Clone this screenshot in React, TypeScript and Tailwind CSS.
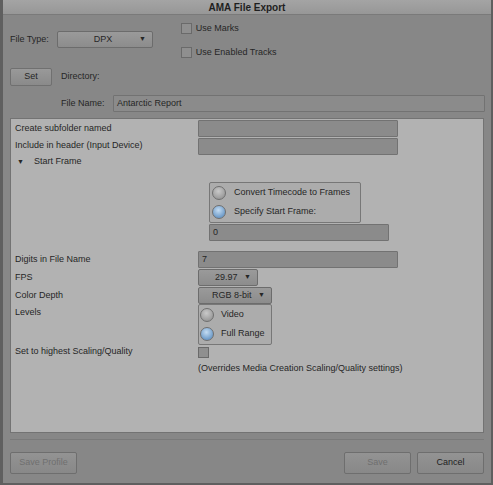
import type { ReactNode } from "react";

const font = "font-['Liberation_Sans',Arial,sans-serif]";

function Radio({ on }: { on?: boolean }) {
  return (
    <span
      className={`inline-block w-[14px] h-[14px] rounded-full border border-[#6f6f6f] shrink-0 ${
        on
          ? "bg-[radial-gradient(circle_at_45%_35%,#c4dcf2,#6f9cc9_70%)]"
          : "bg-[radial-gradient(circle_at_45%_35%,#c9c9c9,#999_75%)]"
      }`}
    />
  );
}

function Checkbox() {
  return (
    <span className="inline-block w-[11px] h-[11px] border border-[#6a6a6a] bg-[#8f8f8f] shrink-0" />
  );
}

function Select({ value, width, indent = "pl-[12px]" }: { value: string; width: string; indent?: string }) {
  return (
    <div
      className={`${width} h-[17px] flex items-center justify-between ${indent} pr-[6px] rounded-[2px] border border-[#6c6c6c] bg-gradient-to-b from-[#9a9a9a] to-[#8c8c8c] text-[#262626]`}
    >
      <span>{value}</span>
      <span className="text-[7px]">▼</span>
    </div>
  );
}

function Field({ width, value }: { width: string; value?: string }) {
  return (
    <div
      className={`${width} h-[17px] flex items-center pl-[3px] border border-[#727272] bg-[#8b8b8b] text-[#262626] rounded-[1px]`}
    >
      {value}
    </div>
  );
}

function Row({ label, children, h = "h-[17px]" }: { label: string; children?: ReactNode; h?: string }) {
  return (
    <div className={`flex items-center ${h}`}>
      <div className="w-[187px] pl-[4px] text-[#262626]">{label}</div>
      {children}
    </div>
  );
}

function Button({ label, width, disabled }: { label: string; width: string; disabled?: boolean }) {
  return (
    <div
      className={`${width} h-[22px] flex items-center justify-center border border-[#6e6e6e] rounded-[2px] bg-gradient-to-b from-[#939393] to-[#888] ${
        disabled ? "text-[#6f6f6f]" : "text-[#1e1e1e]"
      }`}
    >
      {label}
    </div>
  );
}

export default function App() {
  return (
    <div
      className={`w-[493px] h-[485px] flex flex-col bg-[#878787] border-l-[3px] border-r-[2px] border-b-[2px] border-[#5f5f5f] text-[9px] ${font}`}
    >
      {/* Title */}
      <div className="h-[15px] flex items-center justify-center bg-gradient-to-b from-[#a4a4a4] to-[#979797] border-b border-[#7a7a7a] text-[10px] font-bold text-[#1f1f1f]">
        AMA File Export
      </div>

      {/* Top section */}
      <div className="flex pl-[7px] pt-[7px] h-[46px]">
        <div className="flex items-center gap-[8px] h-[33px] mt-[1px] text-[#262626]">
          <span>File Type:</span>
          <Select value="DPX" width="w-[96px]" indent="pl-[36px]" />
        </div>
        <div className="flex flex-col ml-[28px] gap-[10px] text-[#262626]">
          <div className="flex items-center gap-[4px]">
            <Checkbox />
            <span>Use Marks</span>
          </div>
          <div className="flex items-center gap-[4px]">
            <Checkbox />
            <span>Use Enabled Tracks</span>
          </div>
        </div>
      </div>

      <div className="flex items-center pl-[7px] mt-[7px] h-[18px] text-[#262626]">
        <div className="w-[42px] h-[18px] flex items-center justify-center border border-[#707070] rounded-[2px] bg-gradient-to-b from-[#999] to-[#8a8a8a]">
          Set
        </div>
        <span className="ml-[9px]">Directory:</span>
      </div>

      <div className="flex items-center pl-[58px] mt-[9px] h-[17px] text-[#262626]">
        <span className="w-[52px]">File Name:</span>
        <Field width="w-[372px]" value="Antarctic Report" />
      </div>

      {/* Panel */}
      <div className="mx-[7px] mt-[6px] h-[315px] bg-[#b2b2b2] border border-[#737373] pt-[1px] flex flex-col">
        <Row label="Create subfolder named">
          <Field width="w-[200px]" />
        </Row>
        <Row label="Include in header (Input Device)">
          <div className="mt-[2px]">
            <Field width="w-[200px]" />
          </div>
        </Row>
        <div className="flex items-center h-[14px] mt-[1px] pl-[6px] text-[#262626]">
          <span className="text-[7px] mr-[10px]">▼</span>
          <span>Start Frame</span>
        </div>

        <div className="ml-[198px] mt-[13px] w-[152px] h-[41px] border border-[#777] rounded-[2px] bg-[#acacac] flex flex-col justify-center gap-[5px] pl-[2px] text-[#262626]">
          <div className="flex items-center gap-[8px]">
            <Radio />
            <span>Convert Timecode to Frames</span>
          </div>
          <div className="flex items-center gap-[8px]">
            <Radio on />
            <span>Specify Start Frame:</span>
          </div>
        </div>
        <div className="ml-[198px] mt-[1px]">
          <Field width="w-[180px]" value="0" />
        </div>

        <div className="mt-[10px]">
          <Row label="Digits in File Name">
            <Field width="w-[200px]" value="7" />
          </Row>
        </div>
        <div className="mt-[1px]">
          <Row label="FPS">
            <Select value="29.97" width="w-[60px]" indent="pl-[16px]" />
          </Row>
        </div>
        <div className="mt-[1px]">
          <Row label="Color Depth">
            <Select value="RGB 8-bit" width="w-[74px]" indent="pl-[13px]" />
          </Row>
        </div>
        <div className="flex h-[41px]">
          <div className="w-[187px] pl-[4px] pt-[2px] text-[#262626]">Levels</div>
          <div className="w-[74px] h-[41px] border border-[#777] rounded-[2px] bg-[#acacac] flex flex-col justify-center gap-[5px] pl-[1px] text-[#262626]">
            <div className="flex items-center gap-[7px]">
              <Radio />
              <span>Video</span>
            </div>
            <div className="flex items-center gap-[7px]">
              <Radio on />
              <span>Full Range</span>
            </div>
          </div>
        </div>
        <div className="mt-[1px]">
          <Row label="Set to highest Scaling/Quality" h="h-[12px]">
            <Checkbox />
          </Row>
        </div>
        <div className="ml-[187px] mt-[4px] h-[12px] text-[#262626]">
          (Overrides Media Creation Scaling/Quality settings)
        </div>
      </div>

      {/* Footer */}
      <div className="mx-[7px] mt-[6px] border-t border-[#7a7a7a]" />
      <div className="flex items-center justify-between px-[7px] mt-[12px]">
        <Button label="Save Profile" width="w-[67px]" disabled />
        <div className="flex gap-[6px]">
          <Button label="Save" width="w-[67px]" disabled />
          <Button label="Cancel" width="w-[67px]" />
        </div>
      </div>
    </div>
  );
}
